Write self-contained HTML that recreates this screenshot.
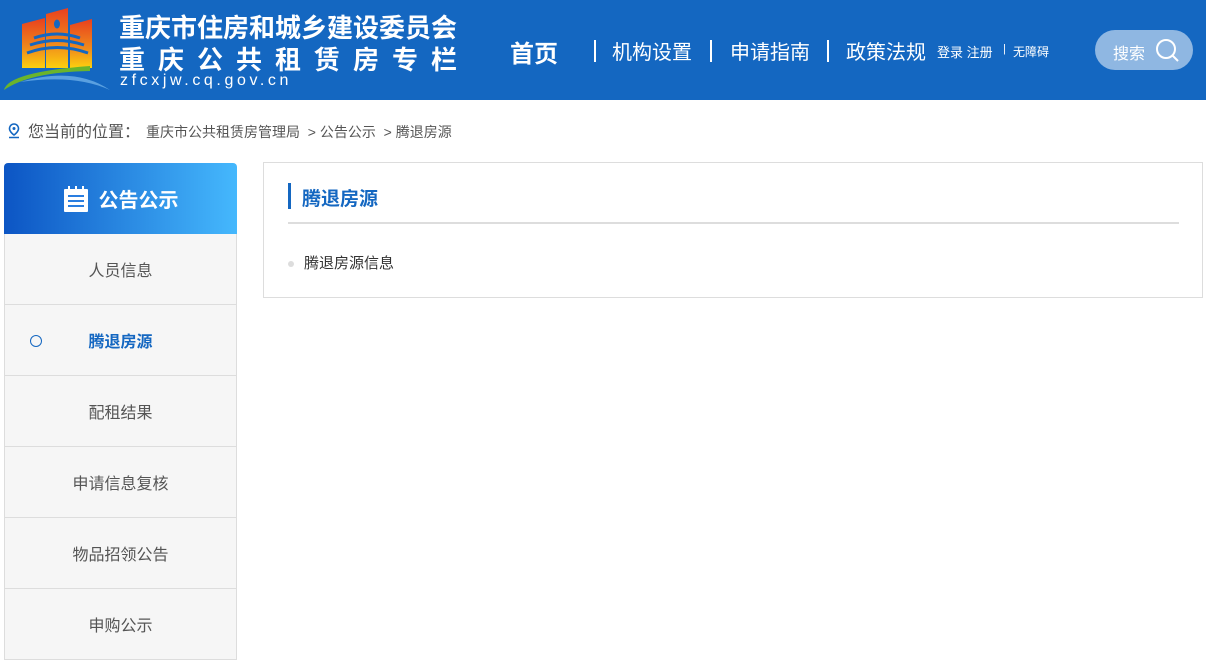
<!DOCTYPE html>
<html><head><meta charset="utf-8">
<style>
*{margin:0;padding:0;box-sizing:border-box}
body{width:1206px;height:664px;overflow:hidden;background:#fff;font-family:"Liberation Sans","Noto Sans CJK SC",sans-serif;position:relative}
.hd{position:absolute;left:0;top:0;width:1206px;height:100px;background:#1467c1;color:#fff}
.t1{position:absolute;left:119px;top:8px;font-size:26px;font-weight:bold;white-space:nowrap}
.t2{position:absolute;left:119px;top:40px;font-size:26px;font-weight:bold;letter-spacing:13px;white-space:nowrap}
.t3{position:absolute;left:120px;top:72px;font-size:16px;letter-spacing:3.6px;white-space:nowrap}
.nav{position:absolute;top:36px;font-size:20px;white-space:nowrap}
.sep{position:absolute;top:40px;width:1.5px;height:22px;background:#fff}
.sm{position:absolute;top:42px;font-size:13px;white-space:nowrap}
.search{position:absolute;left:1095px;top:30px;width:98px;height:40px;border-radius:20px;background:#8fb7e2}
.bc{position:absolute;left:8px;top:118px;color:#555;white-space:nowrap}
.side{position:absolute;left:4px;top:163px;width:233px}
.sh{height:71px;background:linear-gradient(90deg,#0c55c4,#45b8fd);border-radius:4px 4px 0 0;color:#fff;font-size:20px;font-weight:bold;display:flex;align-items:center;justify-content:center}
.it{height:71px;background:#f6f6f6;border:1px solid #ddd;border-top:none;display:flex;align-items:center;justify-content:center;font-size:16px;color:#555;position:relative}
.box{position:absolute;left:263px;top:162px;width:940px;height:136px;border:1px solid #ddd}
</style></head><body>
<div class="hd">
<svg style="position:absolute;left:0;top:0" width="120" height="100" viewBox="0 0 120 100">
<defs><linearGradient id="g" x1="0" y1="0" x2="0" y2="1"><stop offset="0" stop-color="#e8401e"/><stop offset="0.6" stop-color="#f08a1c"/><stop offset="1" stop-color="#fcd00f"/></linearGradient></defs>
<polygon points="22,24 45,18 45,68 22,68" fill="url(#g)"/>
<polygon points="46,14 68,8 68,68 46,68" fill="url(#g)"/>
<polygon points="70,25 92,19 92,68 70,68" fill="url(#g)"/>
<ellipse cx="57" cy="24" rx="3" ry="4.5" fill="#1467c1"/>
<path d="M34 38 Q57 30 80 38 M30 45 Q57 36 84 45 M27 53 Q57 42 88 53" stroke="#1467c1" stroke-width="3" fill="none"/>
<path d="M4 90 Q8 72 90 66 L90 71 Q30 72 4 90Z" fill="#6ab42c"/>
<path d="M20 82 Q75 66 110 90 Q75 74 20 82Z" fill="#5aa0e0"/>
</svg>
<div class="t1">重庆市住房和城乡建设委员会</div>
<div class="t2">重庆公共租赁房专栏</div>
<div class="t3">zfcxjw.cq.gov.cn</div>
<div class="nav" style="left:510px;top:34px;font-size:24px;font-weight:bold">首页</div>
<div class="sep" style="left:594px"></div>
<div class="nav" style="left:612px">机构设置</div>
<div class="sep" style="left:710px"></div>
<div class="nav" style="left:730px">申请指南</div>
<div class="sep" style="left:827px"></div>
<div class="nav" style="left:846px">政策法规</div>
<div class="sm" style="left:937px">登录 注册</div>
<div class="sm" style="left:1003px;top:43px;font-size:11px">|</div>
<div class="sm" style="left:1013px;font-size:12px;top:43px">无障碍</div>
<div class="search"><span style="position:absolute;left:18px;top:10px;font-size:16px">搜索</span>
<svg style="position:absolute;left:60px;top:8px" width="26" height="26" viewBox="0 0 26 26"><circle cx="11" cy="11" r="9" stroke="#fff" stroke-width="2" fill="none"/><line x1="17.5" y1="17.5" x2="23" y2="23" stroke="#fff" stroke-width="2"/></svg></div>
</div>
<div class="bc"><svg width="12" height="16" viewBox="0 0 12 16" style="vertical-align:-2px"><path d="M6 1a4.5 4.5 0 0 0-4.5 4.5C1.5 9 6 12 6 12s4.5-3 4.5-6.5A4.5 4.5 0 0 0 6 1z" fill="none" stroke="#1467c1" stroke-width="1.6"/><circle cx="6" cy="5.5" r="1.5" fill="#1467c1"/><path d="M1 14.5h10" stroke="#1467c1" stroke-width="1.5"/></svg><span style="font-size:16px;margin-left:8px">您当前的位置：</span><span style="font-size:14px;margin-left:6px">重庆市公共租赁房管理局 &nbsp;&gt; 公告公示 &nbsp;&gt; 腾退房源</span></div>
<div class="side">
<div class="sh"><svg width="26" height="28" viewBox="0 0 26 28" style="margin-right:10px"><rect x="1" y="4" width="24" height="23" fill="#fff" rx="1"/><rect x="5" y="1" width="2" height="5" fill="#fff"/><rect x="12" y="1" width="2" height="5" fill="#fff"/><rect x="19" y="1" width="2" height="5" fill="#fff"/><path d="M5 11h16M5 16h16M5 21h16" stroke="#2a7ee0" stroke-width="2"/></svg>公告公示</div>
<div class="it">人员信息</div>
<div class="it" style="color:#1467c1;font-weight:bold"><span style="position:absolute;left:25px;top:30px;width:12px;height:12px;border:1.5px solid #1467c1;border-radius:50%"></span>腾退房源</div>
<div class="it">配租结果</div>
<div class="it">申请信息复核</div>
<div class="it">物品招领公告</div>
<div class="it">申购公示</div>
</div>
<div class="box">
<div style="position:absolute;left:24px;top:20px;width:3px;height:26px;background:#1467c1"></div>
<div style="position:absolute;left:38px;top:21px;font-size:19px;font-weight:bold;color:#1467c1">腾退房源</div>
<div style="position:absolute;left:24px;top:59px;width:891px;height:2px;background:#ddd"></div>
<div style="position:absolute;left:24px;top:98px;width:6px;height:6px;border-radius:50%;background:#ddd"></div>
<div style="position:absolute;left:40px;top:89px;font-size:15px;color:#333">腾退房源信息</div>
</div>
</body></html>
